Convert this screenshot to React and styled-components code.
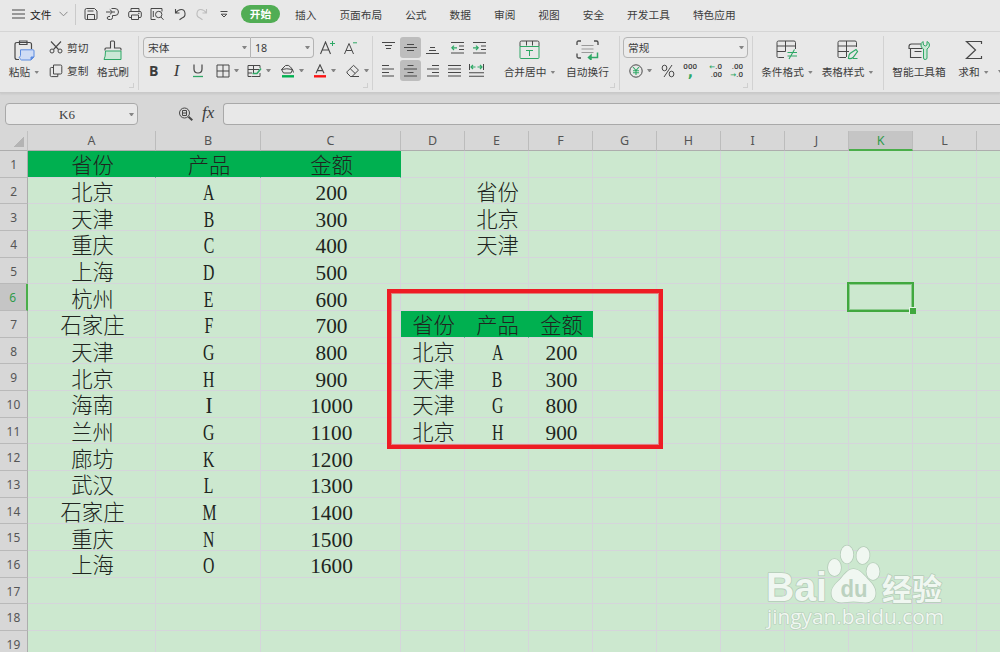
import React from 'react'
import styled, { createGlobalStyle, css } from 'styled-components'

const GREEN = '#2fa866'
const INK = '#484848'

const headerCols = ['A', 'B', 'C', 'D', 'E', 'F', 'G', 'H', 'I', 'J', 'K', 'L', '']
const rowCount = 19
const activeCol = 'K'
const activeRow = 6

const mainTable = [
    ['省份', '产品', '金额'],
    ['北京', 'A', '200'],
    ['天津', 'B', '300'],
    ['重庆', 'C', '400'],
    ['上海', 'D', '500'],
    ['杭州', 'E', '600'],
    ['石家庄', 'F', '700'],
    ['天津', 'G', '800'],
    ['北京', 'H', '900'],
    ['海南', 'I', '1000'],
    ['兰州', 'G', '1100'],
    ['廊坊', 'K', '1200'],
    ['武汉', 'L', '1300'],
    ['石家庄', 'M', '1400'],
    ['重庆', 'N', '1500'],
    ['上海', 'O', '1600'],
]
const filterList = ['省份', '北京', '天津']
const resultTable = [
    ['省份', '产品', '金额'],
    ['北京', 'A', '200'],
    ['天津', 'B', '300'],
    ['天津', 'G', '800'],
    ['北京', 'H', '900'],
]

const cells = {}
const fill = (rows, col, row) => {
    rows.forEach((line, r) => line.forEach((text, c) => {
        cells[`${headerCols[col + c]}${row + r}`] = text
    }))
}
fill(mainTable, 0, 1)
fill(filterList.map((t) => [t]), 4, 2)
fill(resultTable, 3, 7)
const greenCells = ['A1', 'B1', 'C1', 'D7', 'E7', 'F7']

const tabs = [
    { name: '插入', gap: 15 },
    { name: '页面布局', gap: 23 },
    { name: '公式', gap: 23 },
    { name: '数据', gap: 23 },
    { name: '审阅', gap: 23 },
    { name: '视图', gap: 23 },
    { name: '安全', gap: 23 },
    { name: '开发工具', gap: 23 },
    { name: '特色应用', gap: 23 },
]

// line icons share one wrapper, each drawn on its own small grid
const Icon = ({ w = 14, h = 14, ml = 0, children }) => (
    <Svg $ml={ml} width={w} height={h} viewBox={`0 0 ${w} ${h}`} fill="none" stroke={INK} strokeWidth="1">
        {children}
    </Svg>
)

const MenuIcon = () => <Icon ml={12} w={13} h={10}><path d="M0 1h13M0 5h13M0 9h13" /></Icon>
const ChevronIcon = () => <Icon ml={7} w={9} h={6}><path d="M.5 .8l4 4 4-4" stroke="#888" /></Icon>
const SaveIcon = () => (
    <Icon ml={8}>
        <path d="M1 3.200Q1 1.500 2.500 1.500h8L13 4v7.200q0 1.300-1.300 1.300H2.300Q1 12.500 1 11.200z" />
        <path d="M3.500 12.500V7.500h7v5M3.500 4h6" />
    </Icon>
)
const ExportIcon = () => (
    <Icon ml={8}>
        <path d="M5.500 1.500H9q3.500 0 3.500 3.500T9 8.500H6.500M0 5h6M3.800 2.500L6.500 5 3.800 7.500M6.500 5H9M6.500 8.500v2q0 2-2 2H3q-1.800 0-1.800-1.500T3 9.500h1" />
    </Icon>
)
const PrintIcon = () => (
    <Icon ml={8}>
        <path d="M3 4.500V1.500h8v3M3 10.500H2q-1.300 0-1.300-1.300V5.800Q.7 4.500 2 4.500h10q1.300 0 1.300 1.300v3.400q0 1.300-1.300 1.300h-1M3.500 8h7v4.500h-7zM10 6.300h1.500" />
    </Icon>
)
const PreviewIcon = () => (
    <Icon ml={8}>
        <path d="M5.500 12.500H1v-11h11v3M3.300 4v6" />
        <circle cx="8.700" cy="7.500" r="3.200" />
        <path d="M11 10l2.500 2.800" />
    </Icon>
)
const UndoIcon = () => <Icon ml={10} w={12}><path d="M1.500 2v4h4M1.800 5.800Q4 2.500 7.300 2.500T11 6.300 8 11L5.500 12.800" strokeWidth="1.100" /></Icon>
const RedoIcon = () => <Icon ml={10} w={12}><path stroke="#bdbdbd" d="M10.500 2v4h-4M10.200 5.800Q8 2.500 4.700 2.500T1 6.300 4 11L6.500 12.800" strokeWidth="1.100" /></Icon>
const MoreIcon = () => <Icon ml={12} w={8} h={8}><path d="M.5 1.500h7M1.200 4.200h5.600L4 7z" /></Icon>

const PasteIcon = () => (
    <Icon w={21} h={22}>
        <path d="M5 19.500H3Q1 19.500 1 17.500V4.500q0-2 2-2h12.500q2 0 2 2V9M5.500 1h7.500v3.500H5.500z" strokeWidth="1.200" />
        <path d="M6.500 9.800h12.500q1 0 1 1v6.200l-3 3H7.500q-1-.2-1.500-1.500L5 17.500q1.500-.8 1.500-2z" fill="#cfdcf5" stroke="#5b8be0" />
        <path d="M20 17h-3v3z" fill="#5b8be0" stroke="#5b8be0" />
    </Icon>
)
const CutIcon = () => (
    <Icon w={14} h={13}>
        <circle cx="3" cy="10" r="2" />
        <circle cx="11" cy="10" r="2" />
        <path d="M2 .5l7.500 8M12 .5L4.500 8.500" strokeWidth="1.100" />
    </Icon>
)
const CopyIcon = () => <Icon w={14} h={14}><path d="M4.500 1h7q1.300 0 1.300 1.300v6.400q0 1.300-1.300 1.300h-7zM4.500 3.500H2.300Q1.200 3.500 1.200 4.700v6.600q0 1.300 1.300 1.300h6.300V10" /></Icon>
const BrushIcon = () => (
    <Icon w={20} h={21}>
        <path d="M2 10.500V9q0-1 1-1h4.500V2q0-1 1-1h2q1 0 1 1v6H17q1 0 1 1v1.500" strokeWidth="1.100" />
        <path d="M2.500 11h15.500v8.500H1q1.500-2.500 1.500-8.500z" fill="#cbe8d6" stroke={GREEN} />
    </Icon>
)
const GrowIcon = ({ shrink, ml }) => (
    <Icon w={16} h={14} ml={ml}>
        {shrink
            ? <path d="M.5 13L5 2.500 9.500 13M2.100 9.500h5.800" />
            : <path d="M.5 13L5.500 1l5 12M2.200 9h6.600" strokeWidth="1.100" />}
        <path d={shrink ? 'M9 1.800h4' : 'M10 2.500h5M12.500 0v5'} stroke={GREEN} />
    </Icon>
)
const UnderlineIcon = () => (
    <Icon w={12} ml={11}>
        <path d="M2 .5v4.500q0 4 4 4t4-4V.5" strokeWidth="1.200" />
        <path d="M1 12.500h10" stroke={GREEN} strokeWidth="1.300" />
    </Icon>
)
const BorderIcon = () => <Icon ml={12}><path d="M1 1h12v12H1zM7 1v12M1 7h12" /></Icon>
const FillGridIcon = () => (
    <Icon w={15} ml={8}>
        <path d="M13 4V1.500H1v11h3M1 5.500h11M1 9h4M6.500 1.500V9" />
        <path d="M5.500 9.500h4.500l4-5" stroke={GREEN} strokeWidth="1.600" />
        <path d="M4.500 12.500h8.500V9" />
    </Icon>
)
const BucketIcon = () => (
    <Icon w={15} ml={9}>
        <path d="M3.500 9L1.500 5.500 5.500 1.500q3-1 5 1.500L12.500 5.500 11 9zM1.500 5.500q5-1.500 11 0l1 3" />
        <path d="M2 12.300h12" stroke="#00b050" strokeWidth="2.400" />
    </Icon>
)
const FontColorIcon = () => (
    <Icon w={14} ml={9}>
        <path d="M3 9.300L7 .8l4 8.500M4.300 6.600h5.400" strokeWidth="1.100" />
        <path d="M1 12.300h12" stroke="#fb1414" strokeWidth="2.400" />
    </Icon>
)
const EraserIcon = () => <Icon w={14} ml={10}><path d="M1 7.800L7.500 1.300l5 4.800L6 12.500H4.500L1 9zM4.200 4.700l5 4.800M4.500 12.500H13" /></Icon>

const alignPaths = {
    top: 'M0 1.500h13M3 4.500h7M4 7.500h5',
    middle: 'M3 3.500h7M0 6.500h13M3 9.500h7',
    bottom: 'M4 6.500h5M3 9.500h7M0 12.500h13',
    left: 'M0 1.500h7M0 5h12M0 8.500h7M0 12h12',
    center: 'M3.500 1.500h6M0 5h13M3.500 8.500h6M0 12h13',
    right: 'M6 1.500h7M1 5h12M6 8.500h7M1 12h12',
    justify: 'M0 1.500h13M0 5h13M0 8.500h13M0 12h13',
}
const AlignIcon = ({ kind, ml }) => <Icon w={13} h={14} ml={ml}><path d={alignPaths[kind]} strokeWidth="1.200" /></Icon>
const IndentIcon = ({ more, ml }) => (
    <Icon w={13} h={14} ml={ml}>
        <path d="M0 1.500h13M8 5h5M8 8.500h5M0 12h13" strokeWidth="1.100" />
        <path d={more ? 'M0 6.800h5M3 4.600l2.200 2.200L3 9' : 'M.5 6.800H6M3 4.600L.8 6.800 3 9'} stroke={GREEN} strokeWidth="1.200" />
    </Icon>
)
const SpreadIcon = ({ ml }) => (
    <Icon w={15} h={14} ml={ml}>
        <path d="M.5 0v6M14.500 0v6" />
        <path d="M2 3h4.500M4 1L2 3l2 2M8.500 3H13M11 1l2 2-2 2" stroke={GREEN} strokeWidth="1.200" />
        <path d="M0 8.800h15M0 12.300h15" strokeWidth="1.100" />
    </Icon>
)
const MergeIcon = () => (
    <Icon w={21} h={20}>
        <path d="M1 6.500V2.500Q1 1 2.500 1h16Q20 1 20 2.500v4M7.500 1v4.500M13.500 1v4.500" />
        <path d="M1 6.500h19V17.500q0 1-1 1H2q-1 0-1-1zM7 10.500h7M10.500 10.500v5.500" stroke={GREEN} />
    </Icon>
)
const WrapIcon = () => (
    <Icon w={23} h={20}>
        <path d="M1 5V2.500Q1 1 2.500 1H5M18 1h2.500Q22 1 22 2.500V5M1 13.500v3q0 1.500 1.500 1.500H5" strokeWidth="1.300" />
        <path d="M5.500 5.500h12M5.500 9h12M5.500 12.500h12" stroke="#999" />
        <path d="M21.500 12.500v5h-8M15 15.200v4.500L12.500 17.500z" stroke={GREEN} strokeWidth="1.500" />
    </Icon>
)
const YenIcon = () => (
    <Icon ml={9}>
        <circle cx="7" cy="7" r="6.200" />
        <path d="M4 3l3 3.500L10 3M7 6.500V11M4 6.700h6M4 8.800h6" stroke={GREEN} strokeWidth="1.100" />
    </Icon>
)
const PercentIcon = () => (
    <Icon ml={9} w={14}>
        <ellipse cx="3.500" cy="4" rx="2.400" ry="2.800" />
        <ellipse cx="10.500" cy="10" rx="2.400" ry="2.800" />
        <path d="M11 1L3 13" />
    </Icon>
)
const CondIcon = () => (
    <Icon w={22} h={20}>
        <path d="M19.500 9V2.500Q19.500 1 18 1H2.500Q1 1 1 2.500v14Q1 17.500 2.500 17.500H8M1 6h18.500M9.500 1v10.500M1 11.500h8.500" />
        <path d="M11.500 12.500h9.500M11.500 16h9.500M18.500 9.500l-5.500 9.500" stroke={GREEN} strokeWidth="1.100" />
    </Icon>
)
const TableIcon = () => (
    <Icon w={22} h={20}>
        <path d="M19.500 7V2.500Q19.500 1 18 1H2.500Q1 1 1 2.500v14Q1 17.500 2.500 17.500H9M1 6h18.500M9.500 1v16M1 11.500h11" />
        <path d="M11.500 18.500q0-3.500 1.500-5l6-4 1.500 2-4.500 6q-1.500 1.500-4.500 1zM16 18.500h4.500" stroke={GREEN} strokeWidth="1.200" />
    </Icon>
)
const ToolboxIcon = () => (
    <Icon w={23} h={21}>
        <path d="M14 8.500H1V6.500Q1 4 3.500 4h9.500M2.500 8.500v9h11M6.500 11.500h7" strokeWidth="1.100" />
        <path d="M15 1.500q-2.500 1.500-2 4.500.5 2 2.500 3V18q0 1.500 1.700 1.500T19 18V9q2.500-1.500 2.500-4 0-2.500-2.500-3.500V5l-1.700 1L15.500 5z" fill="#cbe8d6" stroke={GREEN} />
    </Icon>
)
const SigmaIcon = () => <Icon w={18} h={21}><path d="M16.500 4V1.500H1.500L10.500 10l-9 8.500h15V16" strokeWidth="1.200" /></Icon>

const SearchFx = () => (
    <Icon w={16} h={15} ml={40}>
        <circle cx="6.500" cy="6" r="5" />
        <path d="M4.500 3.500h4v5h-4zM4.500 6h4" />
        <path d="M10.500 9.800l3.800 3.500" strokeWidth="2" />
    </Icon>
)

const Watermark = () => (
    <Stamp width="190" height="96" viewBox="0 0 190 96">
        <g fill="#f0f7f1" stroke="#b5ccb9" strokeWidth="1.600" paintOrder="stroke" strokeLinejoin="round">
            <text x="6" y="62" fontFamily="Liberation Sans" fontWeight="700" fontSize="40" textLength="61" lengthAdjust="spacingAndGlyphs">Bai</text>
            <ellipse cx="74.500" cy="28.500" rx="6.500" ry="8.500" />
            <ellipse cx="87" cy="15.500" rx="6.300" ry="9" />
            <ellipse cx="103" cy="16.500" rx="6.500" ry="8.500" transform="rotate(8 103 16.500)" />
            <ellipse cx="113" cy="32.500" rx="6.500" ry="8.500" />
            <path d="M93.500 30c-5 0-9 5-13 10-4 4-9 8-9 14 0 6 4 9.500 10 9.500 4 0 7-1 12-1s8 1 12 1c6 0 10-3.500 10-9.500 0-6-4-10-8-14-5-6-9-10-14-10z" />
            <text x="122" y="60.500" fontFamily="Noto Sans CJK SC" fontWeight="700" fontSize="30" textLength="60" lengthAdjust="spacingAndGlyphs">经验</text>
            <text x="7" y="84.500" fontFamily="Open Sans" fontSize="20" fontWeight="500" strokeWidth="1.200" textLength="177" lengthAdjust="spacingAndGlyphs">jingyan.baidu.com</text>
        </g>
        <text x="80.500" y="57.500" fill="#bcd2c0" fontFamily="Liberation Sans" fontWeight="700" fontSize="24" textLength="27" lengthAdjust="spacingAndGlyphs">du</text>
    </Stamp>
)

const Cell = ({ id }) => {
    const text = cells[id]
    return (
        <GridCell $green={greenCells.includes(id)}>
            {text && (/^[A-Z]$/.test(text) ? <Letter $narrow={text !== 'I'}>{text}</Letter> : <span>{text}</span>)}
        </GridCell>
    )
}

const App = () => {
    return (
        <>
            <GlobalStyle />
            <Window>
                <MenuBar>
                    <MenuIcon />
                    <FileLabel>文件</FileLabel>
                    <ChevronIcon />
                    <MenuDivider />
                    <SaveIcon />
                    <ExportIcon />
                    <PrintIcon />
                    <PreviewIcon />
                    <UndoIcon />
                    <RedoIcon />
                    <MoreIcon />
                    <ActiveTab>开始</ActiveTab>
                    {tabs.map((tab) => <Tab key={tab.name} $gap={tab.gap}>{tab.name}</Tab>)}
                </MenuBar>

                <Ribbon>
                    <Group $w={139} $corner>
                        <Big $ml={9} $w={30}>
                            <PasteIcon />
                            <Label>粘贴<Caret /></Label>
                        </Big>
                        <Stack $ml={10}>
                            <Line><CutIcon /><SmallText>剪切</SmallText></Line>
                            <Line><CopyIcon /><SmallText>复制</SmallText></Line>
                        </Stack>
                        <Big $ml={8} $w={32}>
                            <BrushIcon />
                            <Label>格式刷</Label>
                        </Big>
                    </Group>

                    <Group $w={234} $corner>
                        <Stack $ml={4}>
                            <Line>
                                <Select $w={108} $side="left">宋体<Caret /></Select>
                                <Select $w={63} $side="right">18<Caret /></Select>
                                <GrowIcon ml={6} />
                                <GrowIcon shrink ml={8} />
                            </Line>
                            <Line>
                                <Bold>B</Bold>
                                <Italic>I</Italic>
                                <UnderlineIcon />
                                <BorderIcon /><Caret />
                                <FillGridIcon /><Caret />
                                <BucketIcon /><Caret />
                                <FontColorIcon /><Caret />
                                <EraserIcon /><Caret />
                            </Line>
                        </Stack>
                    </Group>

                    <Group $w={247} $corner>
                        <Stack $ml={9}>
                            <Line>
                                <AlignIcon kind="top" />
                                <Pressed><AlignIcon kind="middle" /></Pressed>
                                <AlignIcon kind="bottom" ml={5} />
                                <IndentIcon ml={12} />
                                <IndentIcon more ml={9} />
                            </Line>
                            <Line>
                                <AlignIcon kind="left" />
                                <Pressed><AlignIcon kind="center" /></Pressed>
                                <AlignIcon kind="right" ml={5} />
                                <AlignIcon kind="justify" ml={9} />
                                <SpreadIcon ml={8} />
                            </Line>
                        </Stack>
                        <Big $ml={19} $w={49}>
                            <MergeIcon />
                            <Label>合并居中<Caret /></Label>
                        </Big>
                        <Big $ml={12} $w={43}>
                            <WrapIcon />
                            <Label>自动换行</Label>
                        </Big>
                    </Group>

                    <Group $w={133} $corner>
                        <Stack $ml={3}>
                            <Line><Select $w={125}>常规<Caret /></Select></Line>
                            <Line>
                                <SmallShift><YenIcon /></SmallShift><Caret />
                                <PercentIcon />
                                <Digits $ml={9}><b>000</b><i>,</i></Digits>
                                <Digits $ml={12}><b><em>←</em>.0</b><b>.00</b></Digits>
                                <Digits $ml={8}><b>.00</b><b><em>→</em>.0</b></Digits>
                            </Line>
                        </Stack>
                    </Group>

                    <Group $w={131}>
                        <Big $ml={9} $w={50}>
                            <CondIcon />
                            <Label>条件格式<Caret /></Label>
                        </Big>
                        <Big $ml={10} $w={51}>
                            <TableIcon />
                            <Label>表格样式<Caret /></Label>
                        </Big>
                    </Group>

                    <Group $w={116} $last>
                        <Big $ml={8} $w={54}>
                            <ToolboxIcon />
                            <Label>智能工具箱</Label>
                        </Big>
                        <Big $ml={13} $w={29}>
                            <SigmaIcon />
                            <Label>求和<Caret /></Label>
                        </Big>
                        <EdgeCaret />
                    </Group>
                </Ribbon>

                <FormulaRow>
                    <NameBox><span>K6</span><Caret /></NameBox>
                    <SearchFx />
                    <Fx>fx</Fx>
                    <FormulaInput />
                </FormulaRow>

                <Sheet>
                    <Corner />
                    {headerCols.map((name) => (
                        <ColHead key={name} $active={name === activeCol}>{name}</ColHead>
                    ))}
                    {Array.from({ length: rowCount }, (_, i) => i + 1).map((row) => (
                        <React.Fragment key={row}>
                            <RowHead $active={row === activeRow}><span>{row}</span></RowHead>
                            {headerCols.map((name) => <Cell key={name} id={`${name}${row}`} />)}
                        </React.Fragment>
                    ))}
                    <Selection />
                    <RedFrame />
                    <Watermark />
                </Sheet>
            </Window>
        </>
    )
}

const GlobalStyle = createGlobalStyle`
    * {
        box-sizing: border-box;
    }
    body {
        margin: 0;
        overflow: hidden;
    }
`

const Window = styled.div`
    width: 1000px;
    height: 652px;
    overflow: hidden;
    display: flex;
    flex-direction: column;
    background: #d7d7d7;
    color: #3c3c3c;
    font-family: 'Noto Sans', 'Noto Sans CJK SC', sans-serif;
    font-size: 10.7px;
`

const Svg = styled.svg`
    flex: none;
    display: block;
    margin-left: ${(p) => p.$ml}px;
`

const MenuBar = styled.div`
    height: 32px;
    flex: none;
    display: flex;
    align-items: center;
    padding-bottom: 3px;
    background: #e8e8e8;
    border-bottom: 1px solid #d6d6d6;
    white-space: nowrap;
`
const FileLabel = styled.div`
    margin-left: 5px;
    width: 22px;
    color: #222;
`
const MenuDivider = styled.div`
    width: 1px;
    height: 21px;
    margin-left: 7px;
    background: #cacaca;
`
const ActiveTab = styled.div`
    width: 39px;
    height: 18px;
    margin-left: 13px;
    border-radius: 9px;
    background: #51ad54;
    color: #fff;
    font-weight: 700;
    line-height: 18px;
    text-align: center;
`
const Tab = styled.div`
    margin-left: ${(p) => p.$gap}px;
`

const Ribbon = styled.div`
    height: 61px;
    flex: none;
    display: flex;
    padding-top: 4px;
    background: #e8e8e8;
    border-bottom: 1px solid #c9c9c9;
    box-shadow: 0 1px 2px rgba(0, 0, 0, 0.08);
`
const Group = styled.div`
    width: ${(p) => p.$w}px;
    height: 54px;
    flex: none;
    display: flex;
    border-right: ${(p) => (p.$last ? 'none' : '1px solid #d2d2d2')};
    ${(p) => p.$corner && css`
        background: linear-gradient(#cfcfcf, #cfcfcf) right 4px bottom 2px / 5px 1px no-repeat,
            linear-gradient(#cfcfcf, #cfcfcf) right 4px bottom 2px / 1px 5px no-repeat;
    `}
`
const Big = styled.div`
    width: ${(p) => p.$w}px;
    margin-left: ${(p) => p.$ml}px;
    padding-top: 4px;
    flex: none;
    display: flex;
    flex-direction: column;
    align-items: center;
    justify-content: space-between;
    height: 44px;
`
const Label = styled.div`
    display: flex;
    align-items: center;
    height: 16px;
    line-height: 16px;
    white-space: nowrap;
`
const Caret = styled.span`
    flex: none;
    width: 5px;
    height: 3px;
    margin-left: 4px;
    background: #858585;
    clip-path: polygon(0 0, 100% 0, 60% 100%, 40% 100%);
`
const EdgeCaret = styled(Caret)`
    margin: 34px 0 0 10px;
`
const Stack = styled.div`
    margin-left: ${(p) => p.$ml}px;
    padding-top: 1px;
    display: flex;
    flex-direction: column;
    gap: 2px;
`
const Line = styled.div`
    height: 21px;
    display: flex;
    align-items: center;
    white-space: nowrap;
`
const SmallShift = styled.div`
    display: flex;
    margin-left: -3px;
`
const SmallText = styled.div`
    width: 22px;
    margin-left: 4px;
`
const Select = styled.div`
    width: ${(p) => p.$w}px;
    height: 21px;
    padding: 0 3px 0 4px;
    display: flex;
    align-items: center;
    justify-content: space-between;
    border: 1px solid #b4b4b4;
    border-radius: ${(p) => (p.$side === 'left' ? '4px 0 0 4px' : p.$side === 'right' ? '0 4px 4px 0' : '4px')};
    border-left-width: ${(p) => (p.$side === 'right' ? 0 : 1)}px;
    background: #ebebeb;
`
const Bold = styled.div`
    width: 9px;
    margin-left: 6px;
    font: 700 14px 'Open Sans', sans-serif;
`
const Italic = styled.div`
    width: 9px;
    margin-left: 14px;
    text-align: center;
    font: italic 17px 'Liberation Serif', serif;
`
const Pressed = styled.div`
    width: 21px;
    height: 21px;
    margin-left: 5px;
    display: flex;
    align-items: center;
    justify-content: center;
    border-radius: 3px;
    background: #bdbdbd;
`
const Digits = styled.div`
    width: 13px;
    height: 16px;
    margin-left: ${(p) => p.$ml}px;
    display: flex;
    flex-direction: column;
    align-items: flex-end;
    font: 8px/8px 'Roboto', sans-serif;
    b {
        font-weight: 500;
    }
    em, i {
        color: ${GREEN};
        font-style: normal;
        font-weight: 700;
        font-family: 'DejaVu Sans', sans-serif;
    }
    em {
        font-size: 7px;
    }
    i {
        align-self: center;
        font-size: 14px;
        line-height: 2px;
    }
`

const FormulaRow = styled.div`
    height: 38px;
    flex: none;
    display: flex;
    align-items: center;
    padding: 4px 0 0 5px;
`
const NameBox = styled.div`
    width: 133px;
    height: 22px;
    padding: 1px 3px 0;
    display: flex;
    align-items: center;
    border: 1px solid #a9a9a9;
    border-radius: 4px;
    background: #e8e8e8;
    font: 13px 'Liberation Serif', serif;
    span:first-child {
        flex: 1;
        text-align: center;
    }
`
const Fx = styled.div`
    width: 15px;
    margin-left: 8px;
    font: italic 17px 'Liberation Serif', serif;
    line-height: 18px;
    padding-bottom: 2px;
`
const FormulaInput = styled.div`
    flex: 1;
    height: 22px;
    margin-left: 6px;
    border: 1px solid #a9a9a9;
    border-right: 0;
    border-radius: 4px 0 0 4px;
    background: #e8e8e8;
`

const Sheet = styled.div`
    position: relative;
    flex: none;
    display: grid;
    width: 1041px;
    grid-template-columns: 28px 128px 105px 140px repeat(10, 64px);
    grid-template-rows: 20px repeat(19, 26.667px);
    background: #cce8cf;
`
const Corner = styled.div`
    background: linear-gradient(135deg, transparent 50%, #b4b4b4 50%) 14px 6px / 10px 10px no-repeat, #d7d7d7;
    border-right: 1px solid #c0c0c0;
    border-bottom: 1px solid #adadad;
`
const ColHead = styled.div`
    border-right: 1px solid #bcbcbc;
    border-bottom: ${(p) => (p.$active ? '2px solid #4aae4a' : '1px solid #adadad')};
    background: ${(p) => (p.$active ? '#c5c5c5' : '#d7d7d7')};
    color: ${(p) => (p.$active ? '#2f9a4a' : '#555')};
    font: 12.5px/20px 'Noto Sans', sans-serif;
    text-align: center;
`
const RowHead = styled.div`
    border-right: ${(p) => (p.$active ? '2px solid #4aae4a' : '1px solid #adadad')};
    border-bottom: 1px solid #b9b9b9;
    background: ${(p) => (p.$active ? '#c5c5c5' : '#d7d7d7')};
    color: ${(p) => (p.$active ? '#2f9a4a' : '#555')};
    font: 13px/26px 'Noto Sans', sans-serif;
    text-align: center;
    span {
        display: inline-block;
        transform: scaleX(0.92);
    }
`
const GridCell = styled.div`
    display: flex;
    align-items: center;
    justify-content: center;
    min-width: 0;
    min-height: 0;
    padding: 5px 0 0 2px;
    border-right: 1px solid ${(p) => (p.$green ? '#00b050' : '#d5d5db')};
    border-bottom: 1px solid #d5d5db;
    background: ${(p) => (p.$green ? '#00b050' : 'transparent')};
    background-clip: ${(p) => (p.$green ? 'padding-box' : 'border-box')};
    color: #202420;
    font: 300 21.3px/24px 'Liberation Serif', 'Noto Sans CJK SC', serif;
    white-space: nowrap;
`
const Letter = styled.span`
    transform: scale(${(p) => (p.$narrow ? 0.74 : 1)}, 1.05);
`

const Selection = styled.div`
    position: absolute;
    left: 847px;
    top: 151px;
    width: 67px;
    height: 30px;
    border: 2px solid #41a83f;
    box-shadow: inset 0 0 0 1px rgba(65, 168, 63, 0.45);
    &::after {
        content: '';
        position: absolute;
        right: -4px;
        bottom: -4px;
        width: 6px;
        height: 6px;
        border: 1px solid #e6f4e7;
        border-right: 0;
        border-bottom: 0;
        background: #41a83f;
    }
`
const RedFrame = styled.div`
    position: absolute;
    left: 387px;
    top: 158px;
    width: 276px;
    height: 160px;
    border: 4px solid #ee1c24;
    box-shadow: inset 0 0 0 1px rgba(238, 28, 36, 0.5);
`
const Stamp = styled.svg`
    position: absolute;
    left: 760px;
    top: 408px;
`

export default App
